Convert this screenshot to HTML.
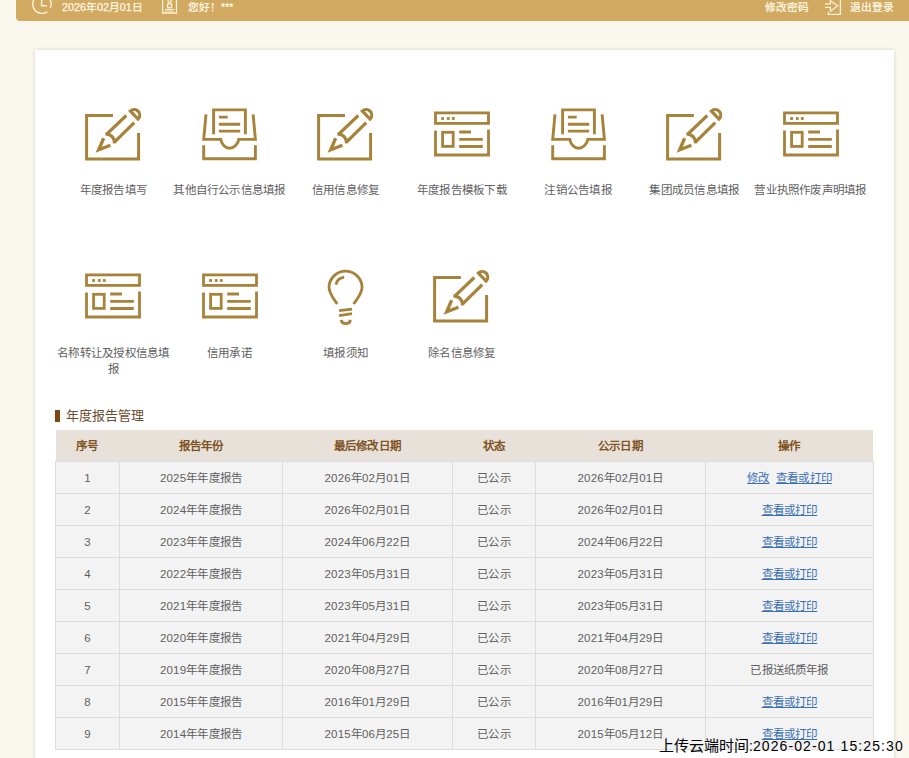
<!DOCTYPE html>
<html lang="zh-CN"><head><meta charset="utf-8"><title>年度报告</title>
<style>
*{margin:0;padding:0;box-sizing:border-box}
html,body{width:909px;height:758px;overflow:hidden}
body{background:#faf7ee;font-family:"Liberation Sans",sans-serif;position:relative;color:#555}
.abs{position:absolute}
#hdr{position:absolute;left:16px;top:-20px;width:900px;height:41.2px;background:#d1a960;border-radius:0 0 0 4px}
.ht{position:absolute;color:#fff8e6;font-size:10.75px;line-height:14px;top:0px;-webkit-text-stroke:0.25px #fff8e6;white-space:nowrap}
#card{position:absolute;left:35px;top:50px;width:859px;height:760px;background:#fff;box-shadow:0 0 4px rgba(0,0,0,0.16)}
.ico{position:absolute;width:70px;height:70px}
.lbl{position:absolute;width:130px;text-align:center;font-size:11.5px;letter-spacing:0.22px;line-height:16px;color:#606060}
#sbar{position:absolute;left:55.3px;top:410px;width:4.5px;height:11.5px;background:#7c4914}
#stitle{position:absolute;left:66px;top:407px;font-size:13px;line-height:18px;color:#6a4c2e}
.th{position:absolute;top:431px;height:31px;line-height:31px;text-align:center;font-size:11.5px;letter-spacing:0.1px;font-weight:bold;color:#7f5424}
.td{position:absolute;height:32px;line-height:32px;margin-top:1px;text-align:center;font-size:11.5px;letter-spacing:0.15px;color:#5f5f5f;white-space:nowrap}
.td a{color:#3a70b6;text-decoration:underline}
.vl{position:absolute;width:1px;background:#dddddd}
.hl{position:absolute;height:1px;background:#dddddd}
#stamp{position:absolute;left:659px;top:735.5px;font-size:14px;line-height:20px;color:#000;white-space:nowrap}
</style></head><body>

<div id="hdr"></div>
<svg class="abs" style="left:0;top:0" width="909" height="22">
<g fill="none" stroke="#fff3d6" stroke-width="1.3">
<path d="M47.3,11.6A9.2,9.2 0 1 1 50.2,8.2" stroke-width="1.4"/>
<path d="M41.6,-2V5.8H46.9" stroke-width="1.5"/>
<path d="M162.6,-2V13H176.5V-2"/>
<path d="M167.6,3.8h4v3.8h-4z"/>
<circle cx="169.6" cy="1" r="1.6"/>
<path d="M164.9,9.6H174.1"/>
<path d="M164.9,11.4H174.1" stroke-opacity="0.5"/>
<path d="M825,3.85H830.4V0.8L837.7,5.8L830.4,11.2V7.3H825" stroke-linejoin="miter"/>
<path d="M828.3,12.1V14.4H840.4V-2"/>
</g></svg>
<div class="ht" style="left:62px">2026年02月01日</div>
<div class="ht" style="left:188px">您好！***</div>
<div class="ht" style="left:764.5px">修改密码</div>
<div class="ht" style="left:850px">退出登录</div>
<div id="card"></div>
<svg class="ico" style="left:75.7px;top:100.0px" viewBox="0 0 70 70"><path d="M36.9,15.5H10.6V59.1H62.6V33" fill="none" stroke="#a7823a" stroke-width="3.0"/>
<g transform="translate(20.5,51.3) rotate(-44.2)" fill="none" stroke="#a7823a" stroke-width="3.2">
<path d="M19.4,-5.2L46.3,-4.9M19.2,6.0L47.1,5.7"/>
<path d="M18.5,-6.2Q24.5,0.4 18.5,7.0"/>
<path d="M14.2,-4.4L2.6,0.4L14.2,5.4" stroke-linejoin="miter" stroke-width="3.3"/>
<path d="M52.3,-5.2V5.8A5.5,5.5 0 0 0 52.3,-5.2Z" stroke-width="3.2"/>
</g></svg>
<div class="lbl" style="left:48.3px;top:181.5px">年度报告填写</div>
<svg class="ico" style="left:194.0px;top:100.0px" viewBox="0 0 70 70"><g fill="none" stroke="#a7823a" stroke-width="2.9">
<path d="M19.6,34.2V9.9H51.4V34.2"/>
<path d="M24.9,17.1H33.7M24.9,24.2H46.2M24.9,31.1H46.2"/>
<path d="M12,14.3L9.7,39.4H26.8C27.5,44 31,48.3 35.6,48.3C40.2,48.3 44,44 44.8,39.4H61.4L59.1,14.3"/>
<path d="M9.7,45.2V58.8H61.4V45.2"/>
</g></svg>
<div class="lbl" style="left:164.5px;top:181.5px">其他自行公示信息填报</div>
<svg class="ico" style="left:308.1px;top:100.0px" viewBox="0 0 70 70"><path d="M36.9,15.5H10.6V59.1H62.6V33" fill="none" stroke="#a7823a" stroke-width="3.0"/>
<g transform="translate(20.5,51.3) rotate(-44.2)" fill="none" stroke="#a7823a" stroke-width="3.2">
<path d="M19.4,-5.2L46.3,-4.9M19.2,6.0L47.1,5.7"/>
<path d="M18.5,-6.2Q24.5,0.4 18.5,7.0"/>
<path d="M14.2,-4.4L2.6,0.4L14.2,5.4" stroke-linejoin="miter" stroke-width="3.3"/>
<path d="M52.3,-5.2V5.8A5.5,5.5 0 0 0 52.3,-5.2Z" stroke-width="3.2"/>
</g></svg>
<div class="lbl" style="left:280.7px;top:181.5px">信用信息修复</div>
<svg class="ico" style="left:426.0px;top:100.0px" viewBox="0 0 70 70"><g fill="none" stroke="#a7823a" stroke-width="2.8">
<rect x="9.5" y="12.9" width="53" height="10.5"/>
<path d="M9.5,30.5V55H62.5V29.4"/>
<rect x="16.6" y="32.3" width="10.6" height="14.1"/>
<path d="M33.2,32H45M33.2,39.4H56.8M33.2,46.5H56.8"/>
</g>
<g fill="#a7823a"><rect x="15.2" y="17.1" width="2.8" height="2.8"/><rect x="20.9" y="17.1" width="2.8" height="2.8"/><rect x="25.9" y="17.1" width="2.8" height="2.8"/></g></svg>
<div class="lbl" style="left:396.9px;top:181.5px">年度报告模板下载</div>
<svg class="ico" style="left:542.6px;top:100.0px" viewBox="0 0 70 70"><g fill="none" stroke="#a7823a" stroke-width="2.9">
<path d="M19.6,34.2V9.9H51.4V34.2"/>
<path d="M24.9,17.1H33.7M24.9,24.2H46.2M24.9,31.1H46.2"/>
<path d="M12,14.3L9.7,39.4H26.8C27.5,44 31,48.3 35.6,48.3C40.2,48.3 44,44 44.8,39.4H61.4L59.1,14.3"/>
<path d="M9.7,45.2V58.8H61.4V45.2"/>
</g></svg>
<div class="lbl" style="left:513.1px;top:181.5px">注销公告填报</div>
<svg class="ico" style="left:656.7px;top:100.0px" viewBox="0 0 70 70"><path d="M36.9,15.5H10.6V59.1H62.6V33" fill="none" stroke="#a7823a" stroke-width="3.0"/>
<g transform="translate(20.5,51.3) rotate(-44.2)" fill="none" stroke="#a7823a" stroke-width="3.2">
<path d="M19.4,-5.2L46.3,-4.9M19.2,6.0L47.1,5.7"/>
<path d="M18.5,-6.2Q24.5,0.4 18.5,7.0"/>
<path d="M14.2,-4.4L2.6,0.4L14.2,5.4" stroke-linejoin="miter" stroke-width="3.3"/>
<path d="M52.3,-5.2V5.8A5.5,5.5 0 0 0 52.3,-5.2Z" stroke-width="3.2"/>
</g></svg>
<div class="lbl" style="left:629.3px;top:181.5px">集团成员信息填报</div>
<svg class="ico" style="left:774.6px;top:100.0px" viewBox="0 0 70 70"><g fill="none" stroke="#a7823a" stroke-width="2.8">
<rect x="9.5" y="12.9" width="53" height="10.5"/>
<path d="M9.5,30.5V55H62.5V29.4"/>
<rect x="16.6" y="32.3" width="10.6" height="14.1"/>
<path d="M33.2,32H45M33.2,39.4H56.8M33.2,46.5H56.8"/>
</g>
<g fill="#a7823a"><rect x="15.2" y="17.1" width="2.8" height="2.8"/><rect x="20.9" y="17.1" width="2.8" height="2.8"/><rect x="25.9" y="17.1" width="2.8" height="2.8"/></g></svg>
<div class="lbl" style="left:745.5px;top:181.5px">营业执照作废声明填报</div>
<svg class="ico" style="left:77.4px;top:262.4px" viewBox="0 0 70 70"><g fill="none" stroke="#a7823a" stroke-width="2.8">
<rect x="9.5" y="12.9" width="53" height="10.5"/>
<path d="M9.5,30.5V55H62.5V29.4"/>
<rect x="16.6" y="32.3" width="10.6" height="14.1"/>
<path d="M33.2,32H45M33.2,39.4H56.8M33.2,46.5H56.8"/>
</g>
<g fill="#a7823a"><rect x="15.2" y="17.1" width="2.8" height="2.8"/><rect x="20.9" y="17.1" width="2.8" height="2.8"/><rect x="25.9" y="17.1" width="2.8" height="2.8"/></g></svg>
<div class="lbl" style="left:48.3px;top:344.5px">名称转让及授权信息填<br>报</div>
<svg class="ico" style="left:193.6px;top:262.4px" viewBox="0 0 70 70"><g fill="none" stroke="#a7823a" stroke-width="2.8">
<rect x="9.5" y="12.9" width="53" height="10.5"/>
<path d="M9.5,30.5V55H62.5V29.4"/>
<rect x="16.6" y="32.3" width="10.6" height="14.1"/>
<path d="M33.2,32H45M33.2,39.4H56.8M33.2,46.5H56.8"/>
</g>
<g fill="#a7823a"><rect x="15.2" y="17.1" width="2.8" height="2.8"/><rect x="20.9" y="17.1" width="2.8" height="2.8"/><rect x="25.9" y="17.1" width="2.8" height="2.8"/></g></svg>
<div class="lbl" style="left:164.5px;top:344.5px">信用承诺</div>
<svg class="ico" style="left:310.0px;top:262.4px" viewBox="0 0 70 70"><g fill="none" stroke="#a7823a" stroke-width="2.8">
<path d="M27.2,42C25,38 19,32.5 19,24.5A16.6,16.6 0 0 1 52.1,24.5C52.1,32.5 46,38 43.6,42"/>
<path d="M25.9,22.6A9.9,9.9 0 0 1 34.2,15.2"/>
<path d="M29.1,48.7L42,47.1M29.1,53.6L42,51.7"/>
<path d="M31,58A5,5 0 0 0 40.6,58"/>
</g></svg>
<div class="lbl" style="left:280.7px;top:344.5px">填报须知</div>
<svg class="ico" style="left:424.3px;top:262.4px" viewBox="0 0 70 70"><path d="M36.9,15.5H10.6V59.1H62.6V33" fill="none" stroke="#a7823a" stroke-width="3.0"/>
<g transform="translate(20.5,51.3) rotate(-44.2)" fill="none" stroke="#a7823a" stroke-width="3.2">
<path d="M19.4,-5.2L46.3,-4.9M19.2,6.0L47.1,5.7"/>
<path d="M18.5,-6.2Q24.5,0.4 18.5,7.0"/>
<path d="M14.2,-4.4L2.6,0.4L14.2,5.4" stroke-linejoin="miter" stroke-width="3.3"/>
<path d="M52.3,-5.2V5.8A5.5,5.5 0 0 0 52.3,-5.2Z" stroke-width="3.2"/>
</g></svg>
<div class="lbl" style="left:396.9px;top:344.5px">除名信息修复</div>
<div id="sbar"></div><div id="stitle">年度报告管理</div>
<div class="abs" style="left:56px;top:430px;width:817px;height:31px;background:#e8e1da"></div>
<div class="abs" style="left:55px;top:461px;width:819px;height:288px;background:#f3f3f3"></div>
<div class="th" style="left:55px;width:65px">序号</div>
<div class="th" style="left:119px;width:164px">报告年份</div>
<div class="th" style="left:282px;width:171px">最后修改日期</div>
<div class="th" style="left:452px;width:84px">状态</div>
<div class="th" style="left:535px;width:171px">公示日期</div>
<div class="th" style="left:705px;width:169px">操作</div>
<div class="td" style="left:55px;top:461px;width:65px">1</div>
<div class="td" style="left:119px;top:461px;width:164px">2025年年度报告</div>
<div class="td" style="left:282px;top:461px;width:171px">2026年02月01日</div>
<div class="td" style="left:452px;top:461px;width:84px">已公示</div>
<div class="td" style="left:535px;top:461px;width:171px">2026年02月01日</div>
<div class="td" style="left:705px;top:461px;width:169px"><a>修改</a>&nbsp;&nbsp;<a>查看或打印</a></div>
<div class="td" style="left:55px;top:493px;width:65px">2</div>
<div class="td" style="left:119px;top:493px;width:164px">2024年年度报告</div>
<div class="td" style="left:282px;top:493px;width:171px">2026年02月01日</div>
<div class="td" style="left:452px;top:493px;width:84px">已公示</div>
<div class="td" style="left:535px;top:493px;width:171px">2026年02月01日</div>
<div class="td" style="left:705px;top:493px;width:169px"><a>查看或打印</a></div>
<div class="td" style="left:55px;top:525px;width:65px">3</div>
<div class="td" style="left:119px;top:525px;width:164px">2023年年度报告</div>
<div class="td" style="left:282px;top:525px;width:171px">2024年06月22日</div>
<div class="td" style="left:452px;top:525px;width:84px">已公示</div>
<div class="td" style="left:535px;top:525px;width:171px">2024年06月22日</div>
<div class="td" style="left:705px;top:525px;width:169px"><a>查看或打印</a></div>
<div class="td" style="left:55px;top:557px;width:65px">4</div>
<div class="td" style="left:119px;top:557px;width:164px">2022年年度报告</div>
<div class="td" style="left:282px;top:557px;width:171px">2023年05月31日</div>
<div class="td" style="left:452px;top:557px;width:84px">已公示</div>
<div class="td" style="left:535px;top:557px;width:171px">2023年05月31日</div>
<div class="td" style="left:705px;top:557px;width:169px"><a>查看或打印</a></div>
<div class="td" style="left:55px;top:589px;width:65px">5</div>
<div class="td" style="left:119px;top:589px;width:164px">2021年年度报告</div>
<div class="td" style="left:282px;top:589px;width:171px">2023年05月31日</div>
<div class="td" style="left:452px;top:589px;width:84px">已公示</div>
<div class="td" style="left:535px;top:589px;width:171px">2023年05月31日</div>
<div class="td" style="left:705px;top:589px;width:169px"><a>查看或打印</a></div>
<div class="td" style="left:55px;top:621px;width:65px">6</div>
<div class="td" style="left:119px;top:621px;width:164px">2020年年度报告</div>
<div class="td" style="left:282px;top:621px;width:171px">2021年04月29日</div>
<div class="td" style="left:452px;top:621px;width:84px">已公示</div>
<div class="td" style="left:535px;top:621px;width:171px">2021年04月29日</div>
<div class="td" style="left:705px;top:621px;width:169px"><a>查看或打印</a></div>
<div class="td" style="left:55px;top:653px;width:65px">7</div>
<div class="td" style="left:119px;top:653px;width:164px">2019年年度报告</div>
<div class="td" style="left:282px;top:653px;width:171px">2020年08月27日</div>
<div class="td" style="left:452px;top:653px;width:84px">已公示</div>
<div class="td" style="left:535px;top:653px;width:171px">2020年08月27日</div>
<div class="td" style="left:705px;top:653px;width:169px">已报送纸质年报</div>
<div class="td" style="left:55px;top:685px;width:65px">8</div>
<div class="td" style="left:119px;top:685px;width:164px">2015年年度报告</div>
<div class="td" style="left:282px;top:685px;width:171px">2016年01月29日</div>
<div class="td" style="left:452px;top:685px;width:84px">已公示</div>
<div class="td" style="left:535px;top:685px;width:171px">2016年01月29日</div>
<div class="td" style="left:705px;top:685px;width:169px"><a>查看或打印</a></div>
<div class="td" style="left:55px;top:717px;width:65px">9</div>
<div class="td" style="left:119px;top:717px;width:164px">2014年年度报告</div>
<div class="td" style="left:282px;top:717px;width:171px">2015年06月25日</div>
<div class="td" style="left:452px;top:717px;width:84px">已公示</div>
<div class="td" style="left:535px;top:717px;width:171px">2015年05月12日</div>
<div class="td" style="left:705px;top:717px;width:169px"><a>查看或打印</a></div>
<div class="vl" style="left:55px;top:461px;height:289px"></div>
<div class="vl" style="left:119px;top:461px;height:289px"></div>
<div class="vl" style="left:282px;top:461px;height:289px"></div>
<div class="vl" style="left:452px;top:461px;height:289px"></div>
<div class="vl" style="left:535px;top:461px;height:289px"></div>
<div class="vl" style="left:705px;top:461px;height:289px"></div>
<div class="vl" style="left:873px;top:461px;height:289px"></div>
<div class="hl" style="left:55px;top:461px;width:819px"></div>
<div class="hl" style="left:55px;top:493px;width:819px"></div>
<div class="hl" style="left:55px;top:525px;width:819px"></div>
<div class="hl" style="left:55px;top:557px;width:819px"></div>
<div class="hl" style="left:55px;top:589px;width:819px"></div>
<div class="hl" style="left:55px;top:621px;width:819px"></div>
<div class="hl" style="left:55px;top:653px;width:819px"></div>
<div class="hl" style="left:55px;top:685px;width:819px"></div>
<div class="hl" style="left:55px;top:717px;width:819px"></div>
<div class="hl" style="left:55px;top:749px;width:819px"></div>
<div id="stamp"><span style="font-size:15px">上传云端时间</span>:<span style="letter-spacing:1.1px">2026-02-01 15:25:30</span></div>
</body></html>
